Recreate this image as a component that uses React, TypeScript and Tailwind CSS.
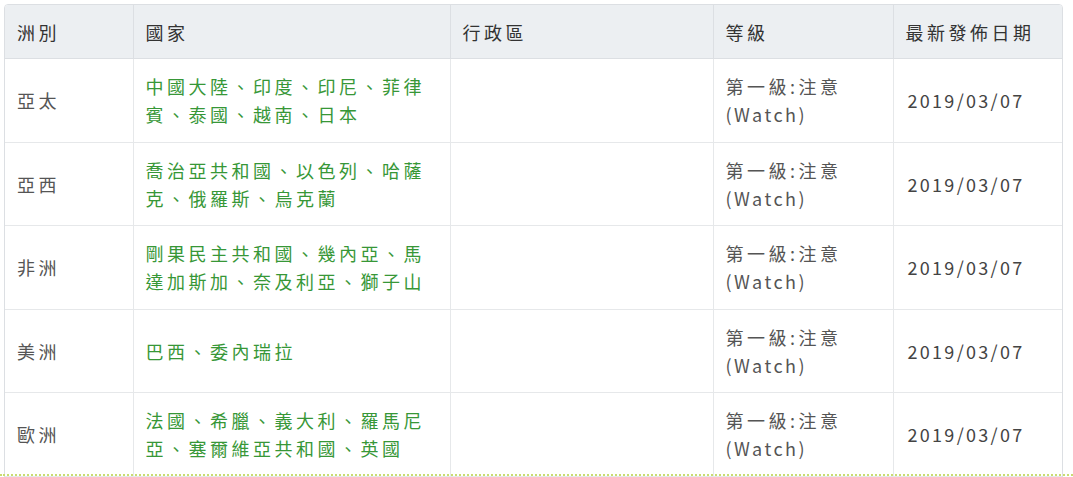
import React from "react";

const rows = [
  { region: "亞太", countries: ["中國大陸、印度、印尼、菲律", "賓、泰國、越南、日本"] },
  { region: "亞西", countries: ["喬治亞共和國、以色列、哈薩", "克、俄羅斯、烏克蘭"] },
  { region: "非洲", countries: ["剛果民主共和國、幾內亞、馬", "達加斯加、奈及利亞、獅子山"] },
  { region: "美洲", countries: ["巴西、委內瑞拉"] },
  { region: "歐洲", countries: ["法國、希臘、義大利、羅馬尼", "亞、塞爾維亞共和國、英國"] },
];

export default function App() {
  return (
    <div
      className="w-[1073px] h-[477px] bg-white overflow-hidden relative"
      style={{ fontFamily: '"Noto Sans CJK TC", "Noto Sans", sans-serif' }}
    >
      <div className="absolute left-0 right-0 top-[474px] border-t-2 border-dotted border-[#c9dc72]" />
      <div className="ml-[4px] mt-[4px] w-[1059px] border border-[#dcdfe3] rounded-t-[4px] overflow-hidden">
        <table className="w-full border-collapse text-[18px] leading-[28px] tracking-[3.5px] table-fixed">
          <colgroup>
            <col className="w-[128px]" />
            <col className="w-[317px]" />
            <col className="w-[263px]" />
            <col className="w-[180px]" />
            <col className="w-[171px]" />
          </colgroup>
          <thead>
            <tr className="bg-[#eceff2] text-[#333]">
              <th className="text-left font-normal px-[12px] py-[12.5px] border-b border-[#dcdfe3]">洲別</th>
              <th className="text-left font-normal px-[12px] py-[12.5px] border-b border-l border-[#dcdfe3]">國家</th>
              <th className="text-left font-normal px-[12px] py-[12.5px] border-b border-l border-[#dcdfe3]">行政區</th>
              <th className="text-left font-normal px-[12px] py-[12.5px] border-b border-l border-[#dcdfe3]">等級</th>
              <th className="text-left font-normal px-[12px] py-[12.5px] border-b border-l border-[#dcdfe3]">最新發佈日期</th>
            </tr>
          </thead>
          <tbody>
            {rows.map((r) => (
              <tr key={r.region} className="text-[#555]">
                <td className="px-[12px] py-[13.25px] border-b border-[#e6e8ea] align-middle">{r.region}</td>
                <td className="px-[12px] py-[13.25px] border-b border-l border-[#e6e8ea] align-middle text-[#379737]">
                  {r.countries.map((c, i) => (
                    <div key={i} className="whitespace-nowrap">{c}</div>
                  ))}
                </td>
                <td className="px-[12px] py-[13.25px] border-b border-l border-[#e6e8ea]"></td>
                <td className="px-[12px] py-[13.25px] border-b border-l border-[#e6e8ea] align-middle text-[#555]">
                  <div className="whitespace-nowrap">第一級:注意</div>
                  <div className="whitespace-nowrap tracking-[2.5px]">(Watch)</div>
                </td>
                <td className="px-[14px] py-[13.25px] border-b border-l border-[#e6e8ea] align-middle text-[#444] tracking-[2.3px]">
                  2019/03/07
                </td>
              </tr>
            ))}
          </tbody>
        </table>
      </div>
    </div>
  );
}
